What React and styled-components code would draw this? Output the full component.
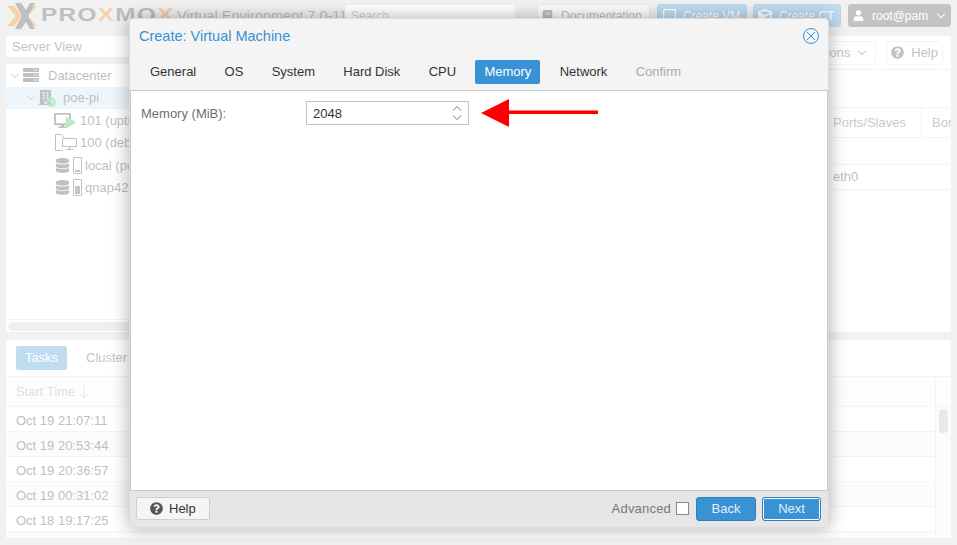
import styled, { createGlobalStyle } from "styled-components";
import {
  FaUser,
  FaQuestionCircle,
  FaBook,
  FaCube,
  FaRegSquare,
  FaServer,
  FaBuilding,
  FaCheckCircle,
  FaPlay,
  FaDatabase,
  FaDesktop,
} from "react-icons/fa";

const Global = createGlobalStyle`
  html, body { margin: 0; padding: 0; height: 100%; overflow: hidden; }
  * { box-sizing: border-box; }
  body { font: 13px "Liberation Sans", Arial, sans-serif; color: #333; background: #d3d3d3; }
`;

const Page = styled.div`
  position: relative;
  width: 957px;
  height: 545px;
  overflow: hidden;
  background: #d3d3d3;
`;

/* ---- the page behind the dialog ---- */

const Header = styled.header`
  display: flex;
  align-items: center;
  height: 36px;
  padding: 0 6px 5px 7px;
`;

const LogoWord = styled.div`
  flex: none;
  width: 132px;
  margin-left: 4px;
  font: 700 18px "Liberation Sans", Arial, sans-serif;
  letter-spacing: 1px;
  color: #3a3a3a;
  white-space: nowrap;
  transform: scaleX(1.35);
  transform-origin: left center;
  span { color: #e57000; }
`;

const Version = styled.div`
  flex: none;
  width: 168px;
  margin-left: 4px;
  font-size: 14.5px;
  color: #333;
  white-space: nowrap;
`;

const SearchBox = styled.div`
  flex: none;
  width: 170px;
  height: 22px;
  margin-right: 22px;
  padding: 4px 6px;
  background: #fff;
  font-size: 12px;
  color: #777;
`;

const HeadButton = styled.div`
  display: flex;
  flex: none;
  align-items: center;
  gap: ${(p) => p.$inner}px;
  width: ${(p) => p.$w}px;
  height: 23px;
  margin-left: ${(p) => p.$gap}px;
  padding: 0 4px;
  border-radius: 3px;
  background: ${(p) => (p.$kind === "blue" ? "#3892d4" : p.$kind === "dark" ? "#464646" : "#f5f5f5")};
  border: 1px solid ${(p) => (p.$kind === "blue" ? "#2f7fb8" : p.$kind === "dark" ? "#464646" : "#c0c0c0")};
  color: ${(p) => (p.$kind ? "#fff" : "#333")};
  font-size: 12px;
  white-space: nowrap;
`;

const Main = styled.div`
  display: flex;
  flex-direction: column;
  gap: 8px;
  padding: 0 6px;
`;

const TopArea = styled.div`
  display: flex;
  gap: 6px;
  height: 296px;
`;

const LeftColumn = styled.div`
  display: flex;
  flex: none;
  flex-direction: column;
  gap: 7px;
  width: 300px;
`;

const ViewSelect = styled.div`
  height: 21px;
  padding: 3px 6px;
  background: #fff;
  color: #444;
`;

const TreePanel = styled.div`
  display: flex;
  flex-direction: column;
  flex: 1;
  background: #fff;
`;

const TreeRow = styled.div`
  display: flex;
  align-items: center;
  height: 22.5px;
  padding-left: ${(p) => p.$indent}px;
  gap: ${(p) => p.$gap ?? 5}px;
  background: ${(p) => (p.$selected ? "#c9e2f5" : "transparent")};
  color: #333;
  white-space: nowrap;
  svg { color: #3c3c3c; flex: none; }
`;

const TreeLabel = styled.span`
  margin-left: ${(p) => p.$offset}px;
`;

const Chevron = styled.span`
  width: 6px;
  height: 6px;
  margin: 0 2px 3px 0;
  border-right: 1px solid #888;
  border-bottom: 1px solid #888;
  transform: rotate(45deg);
`;

const IconStack = styled.span`
  position: relative;
  display: inline-flex;
  width: ${(p) => p.$w}px;
  height: 16px;
`;

const Badge = styled.span`
  position: absolute;
  right: ${(p) => p.$right}px;
  bottom: ${(p) => p.$bottom}px;
  display: flex;
  svg { color: ${(p) => p.$color || "#21bf4b"}; }
`;

const Device = styled.span`
  display: inline-flex;
  align-items: flex-end;
  width: 9px;
  height: 17px;
  margin: 0 -2px 0 -2px;
  padding: 1px;
  border: 1px solid #444;
  border-radius: 1px;
  &::after {
    content: "";
    width: 100%;
    height: ${(p) => p.$fill}px;
    background: #444;
  }
`;

const TreeFoot = styled.div`
  margin-top: auto;
  height: 13px;
  padding: 2px 2px 0;
  border-top: 1px solid #ddd;
`;

const ScrollTrack = styled.div`
  height: 9px;
  border-radius: 5px;
  background: #ccc;
`;

const RightPanel = styled.div`
  display: flex;
  flex-direction: column;
  flex: 1;
  min-width: 0;
  background: #fff;
`;

const ToolRow = styled.div`
  display: flex;
  justify-content: flex-end;
  align-items: center;
  gap: 10px;
  height: 34px;
  padding: 0 8px 0 0;
  border-bottom: 1px solid #ddd;
`;

const GhostButton = styled.div`
  display: flex;
  align-items: center;
  gap: 7px;
  height: 24px;
  padding: 0 ${(p) => p.$pad}px;
  border: 1px solid #ddd;
  border-radius: 3px;
  color: #444;
  svg { color: #444; }
`;

const Caret = styled.span`
  width: 6px;
  height: 6px;
  margin: 0 2px 3px ${(p) => (p.$auto ? "auto" : "2px")};
  border-right: 1px solid ${(p) => p.$color || "#555"};
  border-bottom: 1px solid ${(p) => p.$color || "#555"};
  transform: rotate(45deg);
`;

const IfaceGap = styled.div`
  height: 37px;
`;

const ColumnHead = styled.div`
  display: flex;
  height: 31px;
  border-top: 1px solid #ddd;
  border-bottom: 1px solid #ddd;
  padding-left: 521px;
  align-items: center;
  color: #555;
  white-space: nowrap;
  overflow: hidden;
`;

const HeadCell = styled.div`
  display: flex;
  align-items: center;
  width: ${(p) => p.$w}px;
  height: 100%;
  flex: none;
  border-right: ${(p) => (p.$edge ? "1px solid #ddd" : "0")};
  padding-left: ${(p) => p.$pad || 0}px;
`;

const IfaceRow = styled.div`
  height: 26px;
  margin-top: 26px;
  padding: 4px 0 0 521px;
  border-top: 1px solid #ddd;
  border-bottom: 1px solid #ddd;
  color: #333;
`;

const BottomPanel = styled.div`
  display: flex;
  flex-direction: column;
  height: 198px;
  background: #fff;
`;

const BottomTabs = styled.div`
  display: flex;
  align-items: center;
  gap: 19px;
  height: 36px;
  padding: 0 0 0 10px;
`;

const BottomTab = styled.div`
  width: ${(p) => p.$w}px;
  height: 24px;
  line-height: 24px;
  text-align: ${(p) => (p.$on ? "center" : "left")};
  white-space: nowrap;
  border-radius: 2px;
  background: ${(p) => (p.$on ? "#3892d4" : "transparent")};
  color: ${(p) => (p.$on ? "#fff" : "#444")};
`;

const GridHead = styled.div`
  display: flex;
  height: 31px;
  border-top: 1px solid #ddd;
  border-bottom: 1px solid #ddd;
  background: #f3f8fc;
  color: #999;
`;

const GridWrap = styled.div`
  display: flex;
  flex: 1;
  overflow: hidden;
`;

const GridRows = styled.div`
  flex: 1;
  border-right: 1px solid #ddd;
`;

const GridRow = styled.div`
  display: flex;
  align-items: center;
  height: 25px;
  padding: 2px 0 0 10px;
  border-bottom: 1px solid #ddd;
  background: ${(p) => (p.$alt ? "#f5f5f5" : "#fff")};
  color: #333;
`;

const StartCell = styled.div`
  display: flex;
  align-items: center;
  gap: 4px;
  flex: 1;
  padding-left: 10px;
  border-right: 1px solid #ddd;
`;

const HeadEnd = styled.div`
  width: 15px;
`;

const ScrollColumn = styled.div`
  width: 15px;
  padding: 2px 3px;
  background: #f6f6f6;
`;

const ScrollThumb = styled.div`
  height: 24px;
  border-radius: 4px;
  background: #bbb;
`;

/* ---- mask and dialog ---- */

const Mask = styled.div`
  position: absolute;
  inset: 0;
  background: rgba(255, 255, 255, 0.68);
`;

const Dialog = styled.div`
  position: absolute;
  left: 129px;
  top: 18px;
  display: flex;
  flex-direction: column;
  width: 700px;
  height: 510px;
  border-radius: 4px;
  border: 1px solid #dcdcdc;
  background: #f4f4f4;
  box-shadow: 0 0 18px rgba(0, 0, 0, 0.32);
`;

const TitleBar = styled.div`
  display: flex;
  align-items: center;
  justify-content: space-between;
  height: 33px;
  padding: 0 8px 0 9px;
`;

const Title = styled.div`
  font-size: 14.5px;
  color: #3892d4;
`;

const WizardTabs = styled.div`
  display: flex;
  align-items: center;
  gap: 10.3px;
  height: 38px;
  padding: 2px 0 0 11px;
`;

const Tab = styled.div`
  height: 24px;
  line-height: 24px;
  padding: 0 9px;
  border-radius: 2px;
  background: ${(p) => (p.$active ? "#3892d4" : "transparent")};
  color: ${(p) => (p.$active ? "#fff" : p.$disabled ? "#aaa" : "#333")};
`;

const WizardBody = styled.div`
  position: relative;
  flex: 1;
  padding: 10px;
  border: 1px solid #c9c9c9;
  background: #fff;
`;

const FieldRow = styled.div`
  display: flex;
  align-items: center;
  height: 24px;
`;

const FieldLabel = styled.label`
  width: 165px;
  color: #707070;
`;

const SpinInput = styled.div`
  display: flex;
  align-items: center;
  justify-content: space-between;
  width: 163px;
  height: 24px;
  padding: 0 5px 0 6px;
  border: 1px solid #c4c4c4;
  color: #333;
`;

const SpinArrows = styled.svg`
  width: 12px;
  height: 18px;
`;

const RedArrow = styled.svg`
  position: absolute;
  left: 350px;
  top: 7px;
  width: 118px;
  height: 30px;
`;

const Footer = styled.div`
  display: flex;
  align-items: center;
  height: 36px;
  padding: 0 7px 1px 6px;
  background: #e6e6e6;
  border-radius: 0 0 4px 4px;
`;

const HelpButton = styled.div`
  display: flex;
  align-items: center;
  gap: 6px;
  width: 74px;
  height: 23px;
  padding-left: 13px;
  margin-right: auto;
  border: 1px solid #cfcfcf;
  border-radius: 2px;
  background: #f5f5f5;
  color: #333;
  svg { color: #555; }
`;

const AdvancedLabel = styled.span`
  margin-right: 5px;
  letter-spacing: 0.2px;
  color: #777;
`;

const Checkbox = styled.span`
  width: 13px;
  height: 13px;
  margin-right: 7px;
  border: 1px solid #8a8a8a;
  background: #fff;
`;

const PrimaryButton = styled.div`
  width: ${(p) => p.$w}px;
  height: 24px;
  line-height: 22px;
  margin-left: ${(p) => p.$gap}px;
  text-align: center;
  border: 1px solid #2f7fb8;
  border-radius: 3px;
  background: #3892d4;
  color: #e4f1fa;
  ${(p) => p.$focused && "box-shadow: inset 0 0 0 1px #fff;"}
`;

function ProxmoxMark() {
  return (
    <svg width="30" height="26" viewBox="0 0 30 26">
      <path d="M0 3h7l8 10-8 10H0l9-10zM30 3h-7l-8 10 8 10h7l-9-10z" fill="#e57000" />
      <path d="M8 0h6l5 7 4-7h5l-7 13 7 13h-5l-4-7-5 7H8l7-13z" fill="#3a3a3a" />
    </svg>
  );
}

function ContainerTemplateIcon() {
  return (
    <svg width="22" height="17" viewBox="0 0 22 17" fill="none" stroke="#3c3c3c">
      <path d="M.5 16.5V.5h6l3 3M.5 16.5h7" />
      <path d="M7.5 4.5h14v8h-14zM11 15.5h7M14.5 12.5v3" />
    </svg>
  );
}

const taskTimes = [
  "Oct 19 21:07:11",
  "Oct 19 20:53:44",
  "Oct 19 20:36:57",
  "Oct 19 00:31:02",
  "Oct 18 19:17:25",
  "",
];

const wizardSteps = ["General", "OS", "System", "Hard Disk", "CPU", "Memory", "Network", "Confirm"];

export default function App() {
  return (
    <Page>
      <Global />
      <Header>
        <ProxmoxMark />
        <LogoWord>
          PRO<span>X</span>MO<span>X</span>
        </LogoWord>
        <Version>Virtual Environment 7.0-11</Version>
        <SearchBox>Search</SearchBox>
        <HeadButton $w={113} $gap={0} $inner={8}>
          <FaBook size={11} /> Documentation
        </HeadButton>
        <HeadButton $w={90} $gap={7} $inner={6} $kind="blue">
          <FaRegSquare size={15} /> Create VM
        </HeadButton>
        <HeadButton $w={88} $gap={6} $inner={7} $kind="blue">
          <FaCube size={14} /> Create CT
        </HeadButton>
        <HeadButton $w={103} $gap={7} $inner={8} $kind="dark">
          <FaUser size={11} /> root@pam <Caret $color="#fff" $auto />
        </HeadButton>
      </Header>

      <Main>
        <TopArea>
          <LeftColumn>
            <ViewSelect>Server View</ViewSelect>
            <TreePanel>
              <TreeRow $indent={6} $gap={3}>
                <Chevron />
                <FaServer size={16} />
                <TreeLabel $offset={6}>Datacenter</TreeLabel>
              </TreeRow>
              <TreeRow $indent={22} $gap={2} $selected>
                <Chevron />
                <IconStack $w={18}>
                  <FaBuilding size={15} />
                  <Badge $right={0} $bottom={-1}>
                    <FaCheckCircle size={10} />
                  </Badge>
                </IconStack>
                <TreeLabel $offset={5}>poe-pi</TreeLabel>
              </TreeRow>
              <TreeRow $indent={48} $gap={4}>
                <IconStack $w={22}>
                  <FaDesktop size={17} />
                  <Badge $right={0} $bottom={0}>
                    <FaPlay size={11} />
                  </Badge>
                </IconStack>
                101 (uptime)
              </TreeRow>
              <TreeRow $indent={49} $gap={3}>
                <ContainerTemplateIcon />
                100 (debian)
              </TreeRow>
              <TreeRow $indent={49} $gap={5}>
                <FaDatabase size={15} />
                <Device $fill={2} />
                local (poe-pi)
              </TreeRow>
              <TreeRow $indent={49} $gap={5}>
                <FaDatabase size={15} />
                <Device $fill={8} />
                qnap42 (poe-pi)
              </TreeRow>
              <TreeFoot>
                <ScrollTrack />
              </TreeFoot>
            </TreePanel>
          </LeftColumn>

          <RightPanel>
            <ToolRow>
              <GhostButton $pad={8}>
                Actions <Caret />
              </GhostButton>
              <GhostButton $pad={4}>
                <FaQuestionCircle size={13} /> Help
              </GhostButton>
            </ToolRow>
            <IfaceGap />
            <ColumnHead>
              <HeadCell $w={89} $edge>Ports/Slaves</HeadCell>
              <HeadCell $w={40} $pad={10}>Bond</HeadCell>
            </ColumnHead>
            <IfaceRow>eth0</IfaceRow>
          </RightPanel>
        </TopArea>

        <BottomPanel>
          <BottomTabs>
            <BottomTab $w={51} $on>Tasks</BottomTab>
            <BottomTab $w={60}>Cluster log</BottomTab>
          </BottomTabs>
          <GridHead>
            <StartCell>
              Start Time
              <svg width="10" height="14" viewBox="0 0 10 14" fill="none" stroke="#aaa">
                <path d="M5 0v13M1 9l4 4 4-4" />
              </svg>
            </StartCell>
            <HeadEnd />
          </GridHead>
          <GridWrap>
            <GridRows>
              {taskTimes.map((time, i) => (
                <GridRow key={i} $alt={i % 2 === 1}>{time}</GridRow>
              ))}
            </GridRows>
            <ScrollColumn>
              <ScrollThumb />
            </ScrollColumn>
          </GridWrap>
        </BottomPanel>
      </Main>

      <Mask />

      <Dialog>
        <TitleBar>
          <Title>Create: Virtual Machine</Title>
          <svg width="18" height="18" viewBox="0 0 18 18" fill="none" stroke="#3892d4">
            <circle cx="9" cy="9" r="7.5" />
            <path d="M5 5l8 8M13 5l-8 8" />
          </svg>
        </TitleBar>
        <WizardTabs>
          {wizardSteps.map((step) => (
            <Tab key={step} $active={step === "Memory"} $disabled={step === "Confirm"}>
              {step}
            </Tab>
          ))}
        </WizardTabs>
        <WizardBody>
          <FieldRow>
            <FieldLabel>Memory (MiB):</FieldLabel>
            <SpinInput>
              2048
              <SpinArrows viewBox="0 0 12 18" fill="none" stroke="#777">
                <path d="M2 6.5L6 2.5l4 4M2 11.5l4 4 4-4" />
              </SpinArrows>
            </SpinInput>
          </FieldRow>
          <RedArrow viewBox="0 0 118 30">
            <path d="M0 15L28 1v11.5h89v3.5H28v13z" fill="#f00" />
          </RedArrow>
        </WizardBody>
        <Footer>
          <HelpButton>
            <FaQuestionCircle size={13} /> Help
          </HelpButton>
          <AdvancedLabel>Advanced</AdvancedLabel>
          <Checkbox />
          <PrimaryButton $w={60} $gap={0}>Back</PrimaryButton>
          <PrimaryButton $w={59} $gap={6} $focused>Next</PrimaryButton>
        </Footer>
      </Dialog>
    </Page>
  );
}
